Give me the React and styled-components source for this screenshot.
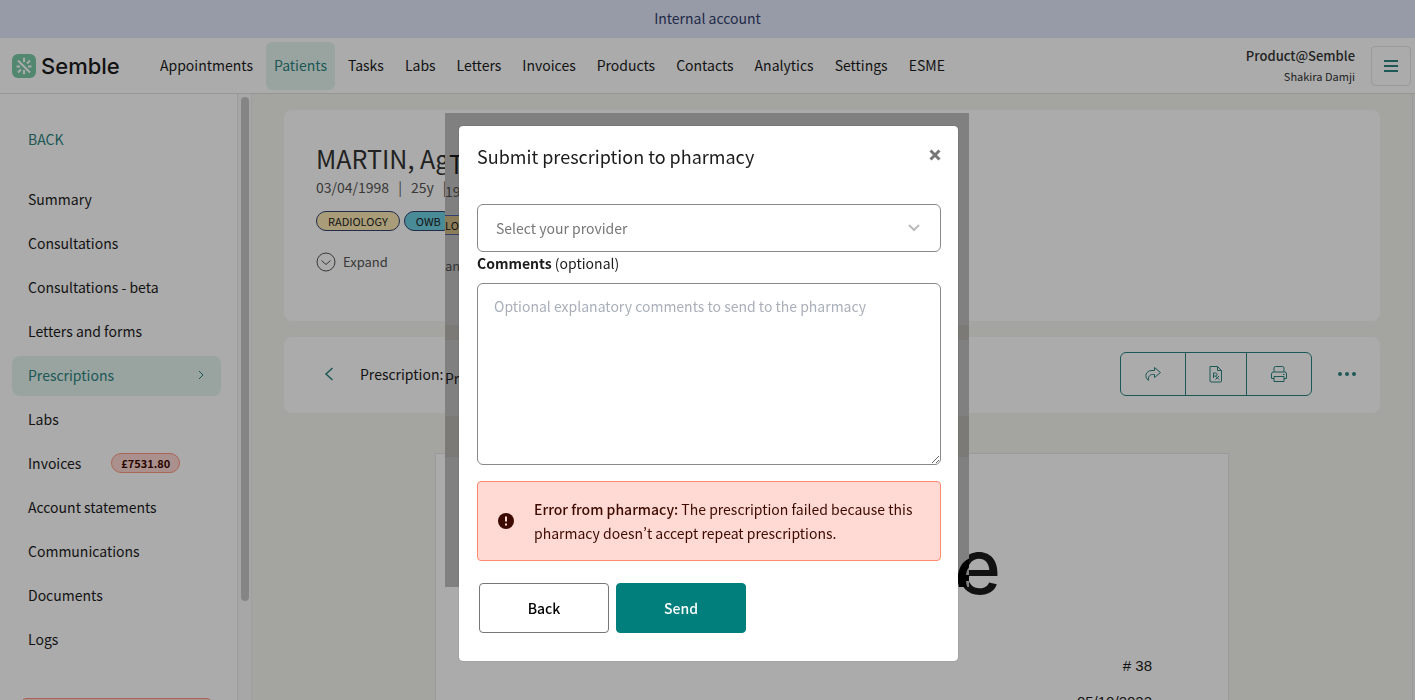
import React from 'react';
import styled, { createGlobalStyle } from 'styled-components';

const GlobalStyle = createGlobalStyle`
  * {
    box-sizing: border-box;
  }

  body {
    margin: 0;
    background: #f5f5f1;
    color: #1c1c1c;
    font-family: 'Noto Sans CJK SC', 'Noto Sans', sans-serif;
    font-size: 14px;
    font-variant-east-asian: proportional-width;
    line-height: 20px;
  }

  a {
    color: inherit;
    text-decoration: none;
  }

  button, select, textarea {
    font: inherit;
    color: inherit;
  }
`;

const mainLinks = [
  'Appointments',
  'Patients',
  'Tasks',
  'Labs',
  'Letters',
  'Invoices',
  'Products',
  'Contacts',
  'Analytics',
  'Settings',
  'ESME',
];

const sideLinks = [
  { label: 'Summary' },
  { label: 'Consultations' },
  { label: 'Consultations - beta' },
  { label: 'Letters and forms' },
  { label: 'Prescriptions', active: true },
  { label: 'Labs' },
  { label: 'Invoices', due: '£7531.80' },
  { label: 'Account statements' },
  { label: 'Communications' },
  { label: 'Documents' },
  { label: 'Logs' },
];

function LogoMark() {
  return (
    <svg width="24" height="24" viewBox="0 0 24 24" aria-hidden="true">
      <rect width="24" height="24" rx="6" fill="#7bcaa8" />
      <g stroke="#fff" strokeWidth="2" fill="none">
        <path d="M6 6.5 18 18.5M12 3.8V8M12 16v4.2M18 6.5l-3 3M9 15.5l-3 3M4.5 12.5H8M16 12.5h3.5" />
      </g>
    </svg>
  );
}

function Header() {
  return (
    <StyledHeader>
      <Logo href="#home">
        <LogoMark />
        Semble
      </Logo>
      <MainNav>
        {mainLinks.map((label) => (
          <MainLink key={label} href={`#${label}`} $active={label === 'Patients'}>
            {label}
          </MainLink>
        ))}
      </MainNav>
      <Account>
        <strong>Product@Semble</strong>
        <span>Shakira Damji</span>
      </Account>
      <MenuButton aria-label="Menu">
        <svg width="14" height="12" viewBox="0 0 14 12" stroke="currentColor" strokeWidth="2">
          <path d="M0 1h14M0 6h14M0 11h14" />
        </svg>
      </MenuButton>
    </StyledHeader>
  );
}

function Sidebar() {
  return (
    <StyledSidebar>
      <BackLink href="#patients">BACK</BackLink>
      {sideLinks.map(({ label, active, due }) => (
        <SideLink key={label} href={`#${label}`} $active={active}>
          {label}
          {due && <Due>{due}</Due>}
          {active && (
            <svg width="8" height="10" viewBox="0 0 8 10" fill="none" stroke="currentColor">
              <path d="m2 1 4 4-4 4" />
            </svg>
          )}
        </SideLink>
      ))}
      <SideAlert />
    </StyledSidebar>
  );
}

function PatientCard() {
  return (
    <StyledPatientCard>
      <h1>MARTIN, Ag</h1>
      <Facts>
        <span>03/04/1998</span>
        <span>|</span>
        <span>25y</span>
        <span>|</span>
      </Facts>
      <Tags>
        <Tag $color="#fbe9b5">RADIOLOGY</Tag>
        <Tag $color="#6fd0e3">OWB</Tag>
      </Tags>
      <ExpandButton>
        <svg width="20" height="20" viewBox="0 0 20 20" fill="none" stroke="currentColor">
          <circle cx="10" cy="10" r="9" />
          <path d="m5.5 8.5 4.5 4 4.5-4" />
        </svg>
        Expand
      </ExpandButton>
    </StyledPatientCard>
  );
}

function Toolbar() {
  return (
    <StyledToolbar>
      <IconButton aria-label="Previous">
        <svg width="10" height="14" viewBox="0 0 10 14" fill="none" stroke="currentColor" strokeWidth="1.5">
          <path d="M8.5 1 2 7l6.5 6" />
        </svg>
      </IconButton>
      <h2>Prescription:</h2>
      <ButtonGroup>
        <button aria-label="Share">
          <svg width="18" height="16" viewBox="0 0 18 16" fill="none" stroke="currentColor" strokeLinejoin="round">
            <path d="M10.5 1.5 16.5 6.5 10.5 11.5V8.5H8.5C5.5 8.5 4 11 4.5 14.5 0 11 1.5 4.5 8 4.5h2.5z" />
          </svg>
        </button>
        <button aria-label="Prescription file">
          <svg width="14" height="18" viewBox="0 0 14 18" fill="none" stroke="currentColor" strokeLinejoin="round">
            <path d="M1 1.5h7.5l4 4v10.5a1 1 0 0 1-1 1H2a1 1 0 0 1-1-1zM8.5 1.5v4h4" />
            <path d="M4.5 13V8h2a1.5 1.5 0 0 1 0 3h-2M6.5 11l3.5 3.5M10 11l-3.5 3.5" />
          </svg>
        </button>
        <button aria-label="Print">
          <svg width="18" height="18" viewBox="0 0 18 18" fill="none" stroke="currentColor" strokeLinejoin="round">
            <path d="M4 7V3a1.5 1.5 0 0 1 1.5-1.5h7A1.5 1.5 0 0 1 14 3v4M4 13.5H1.5V9a2 2 0 0 1 2-2h11a2 2 0 0 1 2 2v4.5H14M4 11.5h10v5H4zM13 9.5h1.5" />
          </svg>
        </button>
      </ButtonGroup>
      <IconButton aria-label="More">
        <svg width="18" height="4" viewBox="0 0 18 4" fill="currentColor">
          <circle cx="2" cy="2" r="2" />
          <circle cx="9" cy="2" r="2" />
          <circle cx="16" cy="2" r="2" />
        </svg>
      </IconButton>
    </StyledToolbar>
  );
}

// Stale copy of the page that stays visible behind the dialog's edges
function Ghost() {
  return (
    <StyledGhost aria-hidden="true">
      <GhostCard $height={212}>
        <GhostName>T</GhostName>
        <GhostDate>19</GhostDate>
        <GhostTag>LOG</GhostTag>
        <GhostExpand>an</GhostExpand>
      </GhostCard>
      <GhostCard $height={76}>
        <GhostTitle>Pr</GhostTitle>
      </GhostCard>
      <GhostPaper>
        <span>e</span>
      </GhostPaper>
    </StyledGhost>
  );
}

function PharmacyDialog() {
  return (
    <Dialog role="dialog" aria-labelledby="dialog-title">
      <DialogHeader>
        <h2 id="dialog-title">Submit prescription to pharmacy</h2>
        <CloseButton aria-label="Close">
          <svg width="12" height="12" viewBox="0 0 12 12" stroke="currentColor" strokeWidth="3">
            <path d="m1.5 1.5 9 9M10.5 1.5l-9 9" />
          </svg>
        </CloseButton>
      </DialogHeader>
      <SelectBox>
        <select aria-label="Provider" defaultValue="">
          <option value="">Select your provider</option>
        </select>
        <svg width="12" height="8" viewBox="0 0 12 8" fill="none" stroke="currentColor" strokeWidth="2">
          <path d="m1 1 5 5 5-5" />
        </svg>
      </SelectBox>
      <Label htmlFor="comments">
        <strong>Comments</strong> (optional)
      </Label>
      <Comments id="comments" placeholder="Optional explanatory comments to send to the pharmacy" />
      <ErrorBox role="alert">
        <svg width="16" height="16" viewBox="0 0 16 16">
          <circle cx="8" cy="8" r="8" fill="#3d0a00" />
          <path d="M8 3.5v5M8 10.5v2" stroke="#ffd9d3" strokeWidth="2" />
        </svg>
        <p>
          <strong>Error from pharmacy:</strong> The prescription failed because this pharmacy
          doesn’t accept repeat prescriptions.
        </p>
      </ErrorBox>
      <Actions>
        <Button>Back</Button>
        <Button $primary>Send</Button>
      </Actions>
    </Dialog>
  );
}

function App() {
  return (
    <Page>
      <GlobalStyle />
      <Banner>Internal account</Banner>
      <Header />
      <Body>
        <Sidebar />
        <Track>
          <Thumb />
        </Track>
        <Main>
          <PatientCard />
          <Toolbar />
          <Paper>
            <PaperLogo>Semble</PaperLogo>
            <p># 38</p>
            <p>05/10/2023</p>
          </Paper>
        </Main>
      </Body>
      <Overlay>
        <Ghost />
        <PharmacyDialog />
      </Overlay>
    </Page>
  );
}

const teal = '#2c8480';

const Page = styled.div`
  height: 100vh;
  overflow: hidden;
  display: flex;
  flex-direction: column;
`;

const Banner = styled.div`
  flex: none;
  height: 38px;
  padding-bottom: 2px;
  display: flex;
  align-items: center;
  justify-content: center;
  background: #e2e8f9;
  color: #33406e;
`;

const StyledHeader = styled.header`
  flex: none;
  height: 56px;
  padding: 0 4px 0 12px;
  display: flex;
  align-items: center;
  background: #fff;
  border-bottom: 1px solid #e0e0e0;
`;

const Logo = styled.a`
  display: flex;
  align-items: center;
  gap: 5px;
  width: 140px;
  font-family: Inter, sans-serif;
  font-size: 22px;
  font-weight: 500;
`;

const MainNav = styled.nav`
  flex: 1;
  display: flex;
  gap: 5px;
`;

const MainLink = styled.a`
  height: 48px;
  padding: 0 8px 2px;
  display: flex;
  align-items: center;
  border-radius: 6px;
  color: ${(props) => (props.$active ? teal : 'inherit')};
  background: ${(props) => (props.$active ? '#e4f5f0' : 'none')};
`;

const Account = styled.div`
  display: flex;
  flex-direction: column;
  align-items: flex-end;
  margin-right: 16px;
  color: #333;
  font-size: 11px;

  strong {
    font-size: 13px;
    font-weight: 500;
  }
`;

const MenuButton = styled.button`
  width: 40px;
  height: 40px;
  padding: 0;
  display: flex;
  align-items: center;
  justify-content: center;
  border: 1px solid #e6e6e6;
  border-radius: 4px;
  background: none;
  color: ${teal};
`;

const Body = styled.div`
  flex: 1;
  min-height: 0;
  display: flex;
`;

const StyledSidebar = styled.nav`
  flex: none;
  width: 238px;
  padding: 35px 16px 0 12px;
  overflow: hidden;
  display: flex;
  flex-direction: column;
  gap: 4px;
  background: #fff;
  border-right: 1px solid #e6e6e6;
`;

const BackLink = styled.a`
  padding: 0 16px;
  margin-bottom: 27px;
  color: ${teal};
`;

const SideLink = styled.a`
  flex: none;
  height: 40px;
  padding: 0 16px 2px;
  display: flex;
  align-items: center;
  border-radius: 8px;
  color: ${(props) => (props.$active ? teal : 'inherit')};
  background: ${(props) => (props.$active ? '#e4f5f0' : 'none')};

  svg {
    margin-left: auto;
  }
`;

const Due = styled.span`
  margin-left: 30px;
  padding: 0 9px;
  border: 1px solid #ff9580;
  border-radius: 10px;
  background: #ffd9d3;
  color: #3d0a00;
  font-size: 11px;
  font-weight: 700;
  line-height: 18px;
`;

const SideAlert = styled.div`
  flex: none;
  height: 60px;
  margin: 34px 10px 0;
  border: 1px solid #ff9580;
  border-radius: 4px;
  background: #ffd9d3;
`;

const Track = styled.div`
  flex: none;
  width: 14px;
  padding: 3px 2px 0 3px;
  background: #fafafa;
  border-right: 1px solid #eee;
`;

const Thumb = styled.div`
  height: 504px;
  border-radius: 4px;
  background: #c6c6c6;
`;

const Main = styled.main`
  flex: 1;
  min-width: 0;
  padding: 16px 32px 0;
  display: flex;
  flex-direction: column;
  gap: 16px;
  border-right: 1px solid #e6e6e6;
  margin-right: 2px;
`;

const Card = styled.section`
  flex: none;
  background: #fff;
  border-radius: 8px;
`;

const StyledPatientCard = styled(Card)`
  height: 211px;
  padding: 32px;

  h1 {
    margin: 0;
    color: #333;
    font-size: 25px;
    font-weight: 400;
    line-height: 32px;
  }
`;

const Facts = styled.div`
  display: flex;
  gap: 9px;
  margin: 3px 0 14px;
  color: #555;
`;

const Tags = styled.div`
  display: flex;
  gap: 4px;
`;

const Tag = styled.span`
  padding: 0 11px;
  border: 1px solid #33406e;
  border-radius: 10px;
  background: ${(props) => props.$color};
  font-size: 11px;
  line-height: 18px;
`;

const ExpandButton = styled.button`
  margin-top: 21px;
  padding: 0;
  display: flex;
  align-items: center;
  gap: 7px;
  border: none;
  background: none;
  color: #555;
  font-size: 13px;
`;

const StyledToolbar = styled(Card)`
  height: 76px;
  padding: 0 20px 2px 36px;
  display: flex;
  align-items: center;

  h2 {
    flex: 1;
    margin: 0 0 0 22px;
    font-size: 14px;
    font-weight: 400;
  }
`;

const IconButton = styled.button`
  padding: 0 4px;
  display: flex;
  border: none;
  background: none;
  color: ${teal};
`;

const ButtonGroup = styled.div`
  display: flex;
  margin-right: 22px;
  border: 1px solid ${teal};
  border-radius: 6px;

  button {
    width: 64px;
    height: 42px;
    padding: 0;
    display: flex;
    align-items: center;
    justify-content: center;
    border: solid ${teal};
    border-width: 0;
    background: none;
    color: ${teal};
  }

  button:nth-child(2) {
    width: 62px;
    border-width: 0 1px;
  }
`;

const Paper = styled.article`
  flex: none;
  align-self: center;
  width: 794px;
  height: 600px;
  margin-top: 24px;
  padding: 72px 76px;
  background: #fff;
  border: 1px solid #e6e6e6;
  font-family: 'Liberation Sans', sans-serif;
  font-size: 15px;
  text-align: right;

  p {
    margin: 0 0 16px;
  }
`;

const PaperLogo = styled.div`
  margin: 0 151px 50px 0;
  font-family: Inter, sans-serif;
  font-size: 76px;
  font-weight: 500;
  line-height: 80px;
`;

const Overlay = styled.div`
  position: fixed;
  inset: 0;
  padding: 113px 1px 0 0;
  display: grid;
  grid-template-columns: 524px;
  justify-content: center;
  align-items: start;
  background: rgba(0, 0, 0, 0.33);

  > * {
    grid-area: 1 / 1;
  }
`;

const StyledGhost = styled.div`
  height: 474px;
  overflow: hidden;
  display: flex;
  flex-direction: column;
  gap: 15px;
  background: #7b7a77;
  color: #111;
`;

const GhostCard = styled.div`
  flex: none;
  height: ${(props) => props.$height}px;
  display: flex;
  flex-direction: column;
  align-items: flex-start;
  background: #808080;
`;

const GhostName = styled.div`
  margin: 34px 0 0 4px;
  font-size: 25px;
  line-height: 32px;
`;

const GhostDate = styled.div`
  margin: 2px 0 14px;
  color: #333;
`;

const GhostTag = styled.div`
  border: 1px solid #33406e;
  border-left: none;
  background: #8a7d58;
  font-size: 11px;
  line-height: 18px;
`;

const GhostExpand = styled.div`
  margin-top: 21px;
  color: #333;
  font-size: 13px;
`;

const GhostTitle = styled.div`
  margin-top: 28px;
`;

const GhostPaper = styled.div`
  flex: 1;
  margin-top: 26px;
  padding-top: 74px;
  background: #808080;
  color: #000;
  font-family: Inter, sans-serif;
  font-size: 76px;
  font-weight: 500;
  line-height: 80px;
  text-align: right;

  span {
    margin-right: -30px;
  }
`;

const Dialog = styled.div`
  z-index: 1;
  min-height: 535px;
  margin: 13px 11px 0 14px;
  padding: 18px 17px 28px 18px;
  background: #fff;
  border-radius: 4px;
  box-shadow: 0 0 1px rgba(0, 0, 0, 0.5);
`;

const DialogHeader = styled.div`
  display: flex;
  align-items: flex-start;
  justify-content: space-between;
  margin-bottom: 36px;

  h2 {
    margin: 0;
    font-size: 18px;
    font-weight: 400;
    line-height: 24px;
  }
`;

const CloseButton = styled.button`
  padding: 5px 0;
  display: flex;
  border: none;
  background: none;
  color: #777;
`;

const SelectBox = styled.div`
  display: grid;
  align-items: center;
  color: #bbb;

  > * {
    grid-area: 1 / 1;
  }

  select {
    height: 48px;
    padding: 0 18px;
    appearance: none;
    background: #fff;
    border: 1px solid #888;
    border-radius: 6px;
    color: #777;
  }

  svg {
    justify-self: end;
    margin-right: 21px;
    pointer-events: none;
  }
`;

const Label = styled.label`
  display: block;
  margin: 1px 0 10px;
`;

const Comments = styled.textarea`
  display: block;
  width: 100%;
  height: 182px;
  padding: 12px 16px;
  border: 1px solid #888;
  border-radius: 6px;

  &::placeholder {
    color: #a9b0ba;
  }
`;

const ErrorBox = styled.div`
  margin: 16px 0 22px;
  padding: 15px 16px 15px 20px;
  display: flex;
  align-items: center;
  gap: 20px;
  border: 1px solid #ff8a70;
  border-radius: 4px;
  background: #ffd9d3;
  color: #3d0a00;

  svg {
    flex: none;
  }

  p {
    margin: 0;
    line-height: 24px;
  }

  strong {
    font-weight: 500;
  }
`;

const Actions = styled.div`
  display: flex;
  gap: 7px;
  padding-left: 2px;
`;

const Button = styled.button`
  width: 130px;
  height: 50px;
  border: 1px solid ${(props) => (props.$primary ? '#007f7c' : '#777')};
  border-radius: 4px;
  background: ${(props) => (props.$primary ? '#007f7c' : '#fff')};
  color: ${(props) => (props.$primary ? '#fff' : '#000')};
  font-weight: 500;
`;

export default App;
